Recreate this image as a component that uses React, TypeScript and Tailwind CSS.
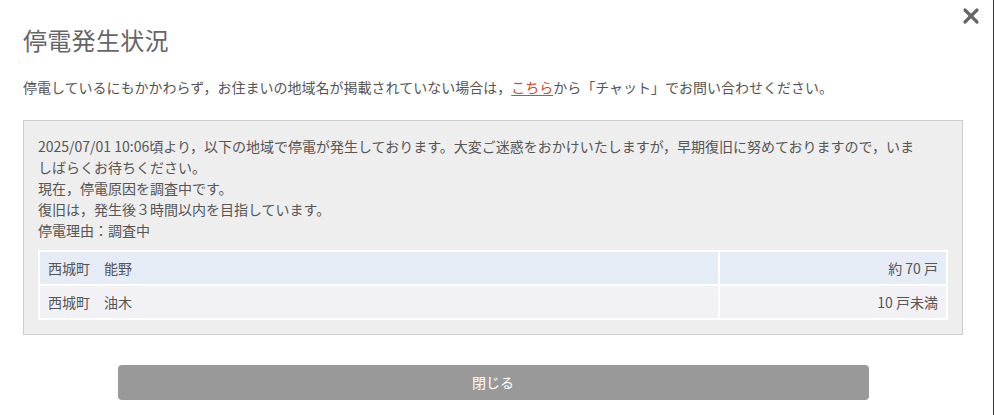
import { X } from 'lucide-react';

const areas = [
  { name: '西城町　能野', count: '約 70 戸' },
  { name: '西城町　油木', count: '10 戸未満' },
];

const App = () => {
  return (
    <div className="relative min-h-[415px] w-[994px] bg-white border-r border-[#333] text-[#555] font-['Noto_Sans_CJK_JP','Noto_Sans',sans-serif]">
      {/* Close button */}
      <button className="absolute right-[10px] top-[4px] text-[#666]">
        <X className="w-[24px] h-[24px]" strokeWidth={3.2} />
      </button>

      <div className="px-[23px] pt-[25px]">
        <h1 className="text-[24px] leading-[29px] text-[#666] tracking-[0.3px]">停電発生状況</h1>

        <p className="mt-[23px] text-[14px] leading-[21px] text-[#555]">
          停電しているにもかかわらず，お住まいの地域名が掲載されていない場合は，
          <a href="#" className="text-[#c8502e] underline underline-offset-2">こちら</a>
          から「チャット」でお問い合わせください。
        </p>

        {/* Notice box */}
        <div className="mt-[22px] w-[940px] bg-[#eeeeee] border border-[#cccccc] px-[14px] pt-[15px] pb-[14px]">
          <div className="text-[14px] leading-[21px] text-[#555]">
            <p>
              2025/07/01 10:06頃より，以下の地域で停電が発生しております。大変ご迷惑をおかけいたしますが，早期復旧に努めておりますので，いま
              <br />
              しばらくお待ちください。
            </p>
            <p>現在，停電原因を調査中です。</p>
            <p>復旧は，発生後３時間以内を目指しています。</p>
            <p>停電理由：調査中</p>
          </div>

          <table className="mt-[9px] w-full border-collapse text-[14px] text-[#555]">
            <tbody>
              {areas.map((a, i) => (
                <tr key={a.name} className={i === 0 ? 'bg-[#e6ecf5]' : 'bg-[#f2f2f6]'}>
                  <td className="h-[34px] px-[8px] border-2 border-white">{a.name}</td>
                  <td className="h-[34px] w-[228px] px-[8px] text-right border-2 border-white">{a.count}</td>
                </tr>
              ))}
            </tbody>
          </table>
        </div>

        <div className="mt-[30px] flex justify-center w-[940px]">
          <button className="w-[751px] h-[35px] rounded-[4px] bg-[#999999] text-white text-[14px]">
            閉じる
          </button>
        </div>
      </div>
    </div>
  );
};

export default App;
